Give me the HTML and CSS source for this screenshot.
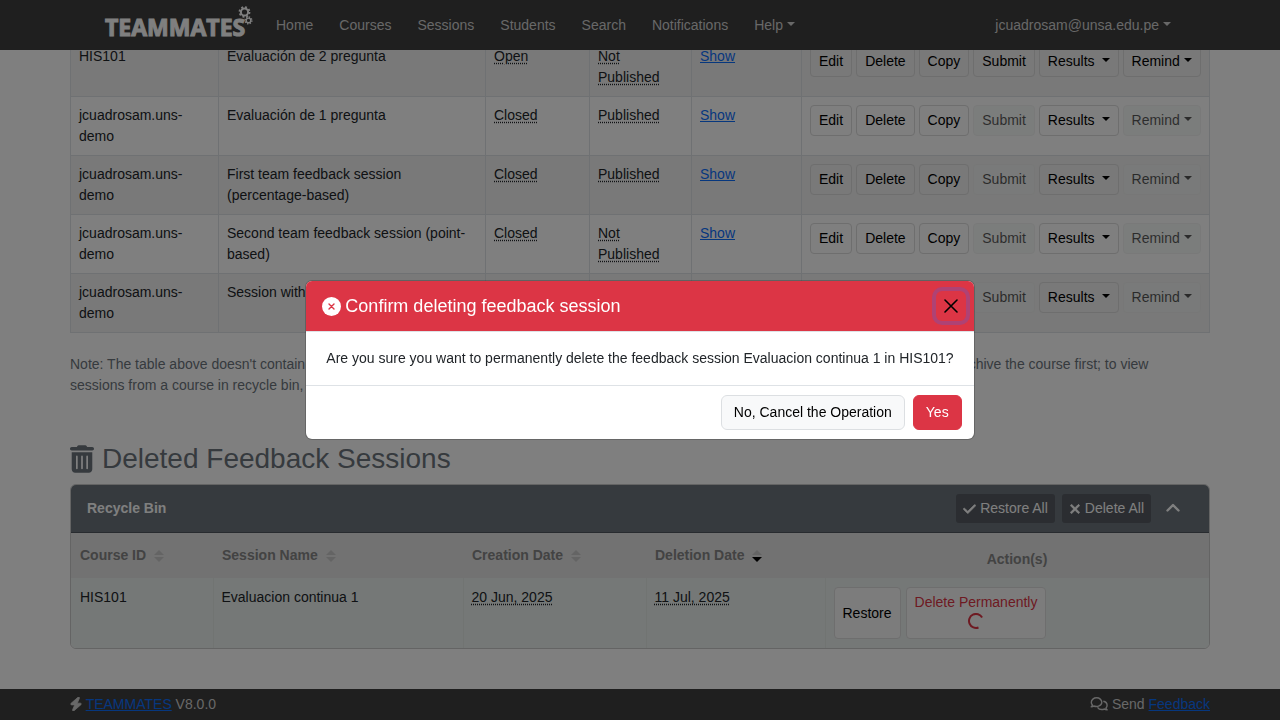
FILE: index.html
```html
<!DOCTYPE html>
<html lang="en">
<head>
<meta charset="utf-8">
<meta name="viewport" content="width=device-width, initial-scale=1">
<title>TEAMMATES - Feedback Sessions</title>
<link rel="stylesheet" href="styles.css">
</head>
<body>
<nav class="navbar">
  <div class="navbar-inner">
    <a class="brand" href="#"><span>TEAMMATES</span>
      <svg class="brand-gears" viewBox="0 0 16 19" fill="none" stroke="#fff">
        <circle cx="7.500" cy="6" r="3.6" stroke-width="2"/>
        <circle cx="7.500" cy="6" r="5" stroke-width="1.8" stroke-dasharray="1.96 1.96"/>
        <circle cx="11.5" cy="14.4" r="2.3" stroke-width="1.4"/>
        <circle cx="11.5" cy="14.4" r="3.4" stroke-width="1.4" stroke-dasharray="1.33 1.33"/>
      </svg>
    </a>
    <div class="nav-links">
      <a href="#">Home</a><a href="#">Courses</a><a href="#">Sessions</a><a href="#">Students</a><a href="#">Search</a><a href="#">Notifications</a><a class="caret" href="#">Help</a>
    </div>
    <a class="user caret" href="#">jcuadrosam@unsa.edu.pe</a>
  </div>
</nav>

<main class="container">
  <table class="sessions">
    <colgroup><col class="c-course"><col class="c-name"><col class="c-status"><col class="c-pub"><col class="c-rate"><col></colgroup>
    <tbody>
      <tr>
        <td>HIS101</td><td>Evaluación de 2 pregunta</td><td><span class="hint">Open</span></td><td><span class="hint">Not Published</span></td><td><a href="#">Show</a></td>
        <td><div class="actions"><button class="btn">Edit</button><button class="btn">Delete</button><button class="btn">Copy</button><button class="btn">Submit</button><button class="btn caret wide">Results</button><button class="btn caret">Remind</button></div></td>
      </tr>
      <tr>
        <td>jcuadrosam.uns-demo</td><td>Evaluación de 1 pregunta</td><td><span class="hint">Closed</span></td><td><span class="hint">Published</span></td><td><a href="#">Show</a></td>
        <td><div class="actions"><button class="btn">Edit</button><button class="btn">Delete</button><button class="btn">Copy</button><button class="btn" disabled>Submit</button><button class="btn caret wide">Results</button><button class="btn caret" disabled>Remind</button></div></td>
      </tr>
      <tr>
        <td>jcuadrosam.uns-demo</td><td>First team feedback session (percentage-based)</td><td><span class="hint">Closed</span></td><td><span class="hint">Published</span></td><td><a href="#">Show</a></td>
        <td><div class="actions"><button class="btn">Edit</button><button class="btn">Delete</button><button class="btn">Copy</button><button class="btn" disabled>Submit</button><button class="btn caret wide">Results</button><button class="btn caret" disabled>Remind</button></div></td>
      </tr>
      <tr>
        <td>jcuadrosam.uns-demo</td><td>Second team feedback session (point-based)</td><td><span class="hint">Closed</span></td><td><span class="hint">Not Published</span></td><td><a href="#">Show</a></td>
        <td><div class="actions"><button class="btn">Edit</button><button class="btn">Delete</button><button class="btn">Copy</button><button class="btn" disabled>Submit</button><button class="btn caret wide">Results</button><button class="btn caret" disabled>Remind</button></div></td>
      </tr>
      <tr>
        <td>jcuadrosam.uns-demo</td><td>Session with different question types</td><td><span class="hint">Closed</span></td><td><span class="hint">Published</span></td><td><a href="#">Show</a></td>
        <td><div class="actions"><button class="btn">Edit</button><button class="btn">Delete</button><button class="btn">Copy</button><button class="btn" disabled>Submit</button><button class="btn caret wide">Results</button><button class="btn caret" disabled>Remind</button></div></td>
      </tr>
    </tbody>
  </table>

  <p class="note">Note: The table above doesn't contain feedback sessions from archived courses or deleted ones. To view sessions from an archived course, unarchive the course first; to view sessions from a course in recycle bin, restore the course first.</p>

  <h2 class="heading">
    <svg class="trash" viewBox="0 0 448 512" fill="currentColor"><path fill-rule="evenodd" d="M135.2 17.7C140.6 6.8 151.7 0 163.8 0h120.4c12.1 0 23.2 6.8 28.6 17.7L320 32h96c17.700 0 32 14.300 32 32s-14.300 32-32 32H32C14.300 96 0 81.700 0 64s14.300-32 32-32h96zM32 128h384v320c0 35.300-28.700 64-64 64H96c-35.300 0-64-28.700-64-64zm96 64c-8.800 0-16 7.200-16 16v224c0 8.800 7.200 16 16 16s16-7.200 16-16V208c0-8.800-7.200-16-16-16zm96 0c-8.800 0-16 7.200-16 16v224c0 8.800 7.200 16 16 16s16-7.200 16-16V208c0-8.800-7.200-16-16-16zm96 0c-8.800 0-16 7.200-16 16v224c0 8.800 7.200 16 16 16s16-7.200 16-16V208c0-8.800-7.200-16-16-16z"/></svg>
    Deleted Feedback Sessions
  </h2>

  <section class="card">
    <header class="card-header">
      <strong>Recycle Bin</strong>
      <div class="card-tools">
        <button class="btn-dark"><svg width="13" height="14" viewBox="0 0 448 512" fill="currentColor" stroke="currentColor" stroke-width="24"><path d="M438.600 105.400c12.500 12.500 12.500 32.800 0 45.300l-256 256c-12.500 12.500-32.800 12.500-45.300 0l-128-128c-12.500-12.500-12.500-32.800 0-45.300s32.800-12.500 45.300 0L160 338.700 393.400 105.400c12.500-12.500 32.800-12.500 45.300 0z"/></svg>Restore All</button>
        <button class="btn-dark"><svg width="12" height="14" viewBox="0 0 384 512" fill="currentColor" stroke="currentColor" stroke-width="32"><path d="M342.600 150.600c12.500-12.500 12.500-32.800 0-45.300s-32.800-12.500-45.300 0L192 210.700 86.600 105.400c-12.500-12.500-32.800-12.500-45.300 0s-12.500 32.800 0 45.300L146.700 256 41.400 361.400c-12.500 12.500-12.500 32.800 0 45.300s32.800 12.500 45.300 0L192 301.300 297.400 406.600c12.500 12.500 32.800 12.500 45.300 0s12.500-32.800 0-45.300L237.300 256z"/></svg>Delete All</button>
        <button class="btn-collapse" aria-label="Collapse"><svg width="14" height="14" viewBox="0 0 14 14" fill="none" stroke="#fff" stroke-width="2.400" stroke-linecap="round" stroke-linejoin="round"><path d="M1.500 9.500 7 4l5.500 5.500"/></svg></button>
      </div>
    </header>
    <table class="bin">
      <colgroup><col class="b-course"><col class="b-name"><col class="b-created"><col class="b-deleted"><col></colgroup>
      <thead>
        <tr>
          <th>Course ID<svg class="sort" viewBox="0 0 10 14"><path d="M0 6 5 1l5 5z"/><path d="M0 8h10L5 13z"/></svg></th>
          <th>Session Name<svg class="sort" viewBox="0 0 10 14"><path d="M0 6 5 1l5 5z"/><path d="M0 8h10L5 13z"/></svg></th>
          <th>Creation Date<svg class="sort" viewBox="0 0 10 14"><path d="M0 6 5 1l5 5z"/><path d="M0 8h10L5 13z"/></svg></th>
          <th>Deletion Date<svg class="sort" viewBox="0 0 10 14"><path d="M0 6 5 1l5 5z"/><path class="active" d="M0 8h10L5 13z"/></svg></th>
          <th class="center">Action(s)</th>
        </tr>
      </thead>
      <tbody>
        <tr>
          <td>HIS101</td><td>Evaluacion continua 1</td><td><span class="hint">20 Jun, 2025</span></td><td><span class="hint">11 Jul, 2025</span></td>
          <td><div class="actions"><button class="btn solid">Restore</button><button class="btn solid danger-text">Delete Permanently<svg class="spinner" viewBox="0 0 16 16" fill="none" stroke="currentColor" stroke-width="2"><path d="M14.100 4.500A7 7 0 1 0 10.500 14.500"/></svg></button></div></td>
        </tr>
      </tbody>
    </table>
  </section>
</main>

<footer class="footer">
  <div class="container footer-inner">
    <span><svg class="bolt" viewBox="32 0 384 512" fill="currentColor" stroke="currentColor" stroke-width="28"><path d="M349.400 44.600c5.900-13.700 1.500-29.700-10.600-38.500s-28.600-8-39.900 1.800l-256 224C32.900 241.500 29.300 256.400 34 269.400S50.100 288 64 288h111.500L98.600 467.400c-5.900 13.700-1.500 29.700 10.600 38.500s28.600 8 39.900-1.800l256-224c10-8.800 13.600-22.900 8.900-35.300S397.900 224 384 224H272.500z"/></svg> <a href="#">TEAMMATES</a> V8.0.0</span>
    <span><svg class="chat" viewBox="0 0 18 14" fill="none" stroke="currentColor" stroke-width="1.400" stroke-linejoin="round"><path d="M1.200 9.800C3 9.800 3.700 9 3.700 9c3.600 1.400 8.100-.4 8.100-3.700C11.800 2.800 9.500.8 6.600.8S1.300 2.800 1.300 5.300c0 1 .4 2 1.100 2.700 0 .700-.500 1.300-1.200 1.800z"/><path d="M13.300 4.200c2.200.4 3.800 2 3.800 4.100 0 1-.4 1.900-1.100 2.600 0 .800.500 1.500 1.100 2-1.800 0-2.600-.9-2.600-.9-2.700 1-5.700.2-7-1.700"/></svg> Send <a href="#">Feedback</a></span>
  </div>
</footer>

<div class="backdrop">
  <div class="modal" role="dialog" aria-modal="true" aria-labelledby="modal-title">
    <div class="modal-header">
      <svg width="19" height="19" viewBox="0 0 19 19"><circle cx="9.500" cy="9.500" r="9.500" fill="#fff"/><path d="m7 7 5 5m0-5-5 5" stroke="#dc3545" stroke-width="1.400" stroke-linecap="round"/></svg>
      <h5 id="modal-title">Confirm deleting feedback session</h5>
      <button class="close" aria-label="Close"><svg width="14" height="14" viewBox="0 0 14 14" fill="none" stroke="#000" stroke-width="1.600" stroke-linecap="round"><path d="m1 1 12 12M13 1 1 13"/></svg></button>
    </div>
    <div class="modal-body">Are you sure you want to permanently delete the feedback session Evaluacion continua 1 in HIS101?</div>
    <div class="modal-footer">
      <button class="btn-modal light">No, Cancel the Operation</button>
      <button class="btn-modal danger">Yes</button>
    </div>
  </div>
</div>
</body>
</html>
```

FILE: styles.css
```css
* { box-sizing: border-box; }

body {
  margin: 0;
  min-height: 100vh;
  display: flex;
  flex-direction: column;
  overflow: hidden;
  background: #fff;
  color: #212529;
  font: 14px/21px "Liberation Sans", Arial, sans-serif;
}

a { color: #0d6efd; }

button {
  font: inherit;
  cursor: pointer;
}

.container {
  width: 100%;
  max-width: 1140px;
  margin: 0 auto;
}

/* Top bar */
.navbar {
  position: fixed;
  top: 0;
  left: 0;
  right: 0;
  z-index: 10;
  height: 50px;
  background: #3e3e3e;
}

.navbar-inner {
  display: flex;
  align-items: center;
  max-width: 1070px;
  height: 100%;
  margin: 0 auto;
}

.brand {
  position: relative;
  width: 147px;
  margin-right: 24px;
  padding-top: 3px;
  color: #fff;
  font: 700 23px/30px "Open Sans", sans-serif;
  text-decoration: none;
  -webkit-text-stroke: 1px #fff;
}

.brand-gears {
  position: absolute;
  top: -3px;
  right: -1px;
  width: 16px;
  height: 19px;
}

.nav-links {
  display: flex;
  gap: 26px;
}

.nav-links a,
.user {
  color: #d0d0d0;
  text-decoration: none;
}

.user {
  margin-left: auto;
  margin-right: 4px;
}

.caret::after {
  content: "";
  display: inline-block;
  margin-left: 4px;
  vertical-align: 4px;
  border: 4px solid transparent;
  border-top-color: currentColor;
  border-bottom: 0;
}

.wide::after { margin-left: 7px; }

/* Sessions table */
main { padding-top: 37px; }

table {
  width: 100%;
  border-collapse: collapse;
  table-layout: fixed;
}

td,
th {
  padding: 8px;
  vertical-align: top;
  text-align: left;
}

.sessions td { border: 1px solid #dee2e6; }
.sessions tr:nth-child(odd) { background: #f2f2f2; }

.c-course { width: 148px; }
.c-name { width: 267px; }
.c-status { width: 104px; }
.c-pub { width: 102px; }
.c-rate { width: 110px; }

.hint {
  text-decoration: underline dotted;
  text-underline-offset: 2px;
}

.actions {
  display: flex;
  gap: 4px;
}

.btn {
  padding: 4px 8px;
  border: 1px solid #dcdcdc;
  border-radius: 4px;
  background: transparent;
  color: #000;
  white-space: nowrap;
}

.btn:disabled {
  opacity: .65;
  border-color: #eceeed;
  background: #f4f8f6;
}

.note {
  max-width: 1120px;
  margin: 21px 0 0;
  color: #6c757d;
}

.heading {
  display: flex;
  align-items: center;
  gap: 8px;
  margin: 46px 0 8px;
  color: #6c757d;
  font-size: 28px;
  font-weight: 400;
  line-height: 34px;
}

.trash {
  width: 24px;
  height: 28px;
}

/* Recycle bin */
.card {
  border: 1px solid #c8c8c8;
  border-radius: 6px;
  overflow: hidden;
}

.card-header {
  display: flex;
  align-items: center;
  justify-content: space-between;
  min-height: 48px;
  padding: 8px 16px;
  border-bottom: 1px solid #50575e;
  background: #6c757d;
  color: #fff;
}

.card-tools {
  display: flex;
  align-items: center;
  gap: 7px;
}

.btn-dark,
.btn-collapse {
  display: flex;
  align-items: center;
  gap: 4px;
  padding: 4px 7px;
  border: 0;
  border-radius: 3px;
  background: #565b62;
  color: #fff;
}

.btn-collapse {
  padding: 7px 13px 9px 8px;
  background: none;
}

.b-course { width: 142px; }
.b-name { width: 250px; }
.b-created { width: 183px; }
.b-deleted { width: 179px; }

.bin th {
  padding: 12px 9px;
  background: #e4e4e4;
  color: #868686;
}

.bin th.center {
  padding-top: 16px;
  padding-bottom: 8px;
  text-align: center;
}

.bin td {
  padding: 9px 8px;
  border-right: 1px solid #e2e8e5;
  background: #eaf0ee;
}

.bin td:first-child { padding-left: 9px; }
.bin td:last-child { border-right: 0; }

.sort {
  width: 10px;
  height: 14px;
  margin-left: 8px;
  vertical-align: -3px;
  fill: #c9c9c9;
}

.sort .active { fill: #000; }

.solid { background: #f9f9f9; }

.danger-text {
  display: flex;
  flex-direction: column;
  align-items: center;
  color: #dc3545;
}

.spinner {
  width: 16px;
  height: 16px;
  margin-bottom: 5px;
}

.actions .solid + .solid { margin-left: 1px; }

/* Footer */
.footer {
  margin-top: auto;
  padding: 5px 0;
  background: #3e3e3e;
  color: #d0d0d0;
}

.footer-inner {
  display: flex;
  justify-content: space-between;
}

.bolt {
  width: 12px;
  height: 14px;
  vertical-align: -2px;
}

.chat {
  width: 18px;
  height: 14px;
  vertical-align: -2px;
}

/* Confirmation dialog */
.backdrop {
  position: fixed;
  inset: 0;
  z-index: 20;
  display: flex;
  align-items: center;
  justify-content: center;
  background: rgba(0, 0, 0, .5);
}

.modal {
  border: 1px solid rgba(0, 0, 0, .2);
  border-radius: 7px;
  background: #fff;
  background-clip: padding-box;
  overflow: hidden;
}

.modal-header {
  display: flex;
  align-items: center;
  gap: 4px;
  padding: 10px 8px 10px 16px;
  border-bottom: 1px solid #dee2e6;
  background: #dc3545;
  color: #fff;
}

.modal-header h5 {
  margin: 0;
  font-size: 18px;
  font-weight: 400;
}

.close {
  display: flex;
  align-items: center;
  justify-content: center;
  width: 30px;
  height: 30px;
  margin-left: auto;
  padding: 0;
  border: 0;
  border-radius: 6px;
  background: none;
  box-shadow: 0 0 0 4px #af4274;
}

.modal-body { padding: 16px 20px; }

.modal-footer {
  display: flex;
  justify-content: flex-end;
  gap: 8px;
  padding: 9px 12px;
  border-top: 1px solid #dee2e6;
}

.btn-modal {
  padding: 6px 12px;
  border: 1px solid #dc3545;
  border-radius: 6px;
}

.danger {
  background: #dc3545;
  color: #fff;
}

.light {
  border-color: #dcdfe2;
  background: #f8f9fa;
  color: #000;
}
```
